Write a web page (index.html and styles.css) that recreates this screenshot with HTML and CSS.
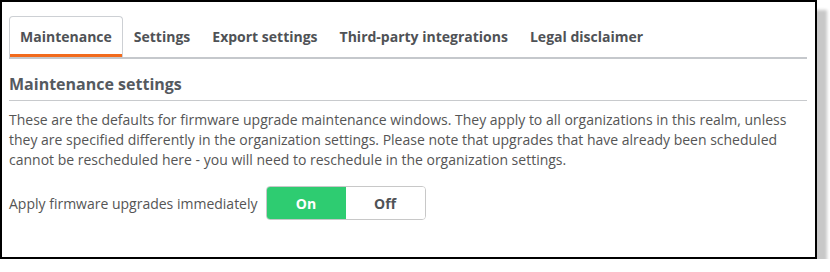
FILE: index.html
```html
<!DOCTYPE html>
<html lang="en">
<head>
    <meta charset="UTF-8">
    <title>Maintenance</title>
    <link rel="stylesheet" href="styles.css">
</head>
<body>
    <div class="frame">
        <ul class="tabs">
            <li class="tab active">Maintenance</li>
            <li class="tab">Settings</li>
            <li class="tab">Export settings</li>
            <li class="tab">Third-party integrations</li>
            <li class="tab">Legal disclaimer</li>
        </ul>
        <h2 class="section-title">Maintenance settings</h2>
        <p class="note">These are the defaults for firmware upgrade maintenance windows. They apply to all organizations in this realm, unless
            they are specified differently in the organization settings. Please note that upgrades that have already been scheduled
            cannot be rescheduled here - you will need to reschedule in the organization settings.</p>
        <div class="setting-row">
            <span class="setting-label">Apply firmware upgrades immediately</span>
            <div class="switch">
                <button class="switch-btn on">On</button>
                <button class="switch-btn">Off</button>
            </div>
        </div>
    </div>
</body>
</html>
```

FILE: styles.css
```css
body {
    margin: 0;
    background: #fff;
    font-family: 'Open Sans', Arial, sans-serif;
    color: #555;
}
.frame {
    width: 798px;
    height: 241px;
    border: 2px solid #000;
    padding: 14px 8px 0 7px;
    box-shadow: 10px 10px 3px #c8c8c8;
}
.tabs {
    display: flex;
    list-style: none;
    margin: 0;
    padding: 0;
    border-bottom: 2px solid #c5c8cc;
}
.tab {
    padding: 12px 10px 12px 10px;
    font-size: 14px;
    font-weight: 700;
    line-height: 16px;
    color: #4f5256;
    border: 1px solid transparent;
    border-bottom: none;
}
.tab.active {
    border-color: #cdd0d4;
    border-radius: 4px 4px 0 0;
    box-shadow: inset 0 -3px 0 #f26b1d;
}
.section-title {
    margin: 0;
    padding: 16px 0 7px 0;
    font-size: 16px;
    font-weight: 700;
    line-height: 18px;
    color: #555a5f;
    border-bottom: 1px solid #c8cacd;
}
.note {
    margin: 0;
    padding-top: 9px;
    font-size: 14px;
    line-height: 20px;
    color: #555;
}
.setting-row {
    display: flex;
    align-items: center;
    gap: 8px;
    margin-top: 16px;
}
.setting-label {
    font-size: 14px;
    color: #555;
}
.switch {
    display: flex;
    border: 1px solid #c8c8c8;
    border-radius: 4px;
    overflow: hidden;
}
.switch-btn {
    width: 79px;
    height: 32px;
    border: none;
    background: #fff;
    font-family: 'Open Sans', Arial, sans-serif;
    font-size: 14px;
    font-weight: 700;
    color: #4f5256;
}
.switch-btn.on {
    background: #2ecc71;
    color: #fff;
}
```
